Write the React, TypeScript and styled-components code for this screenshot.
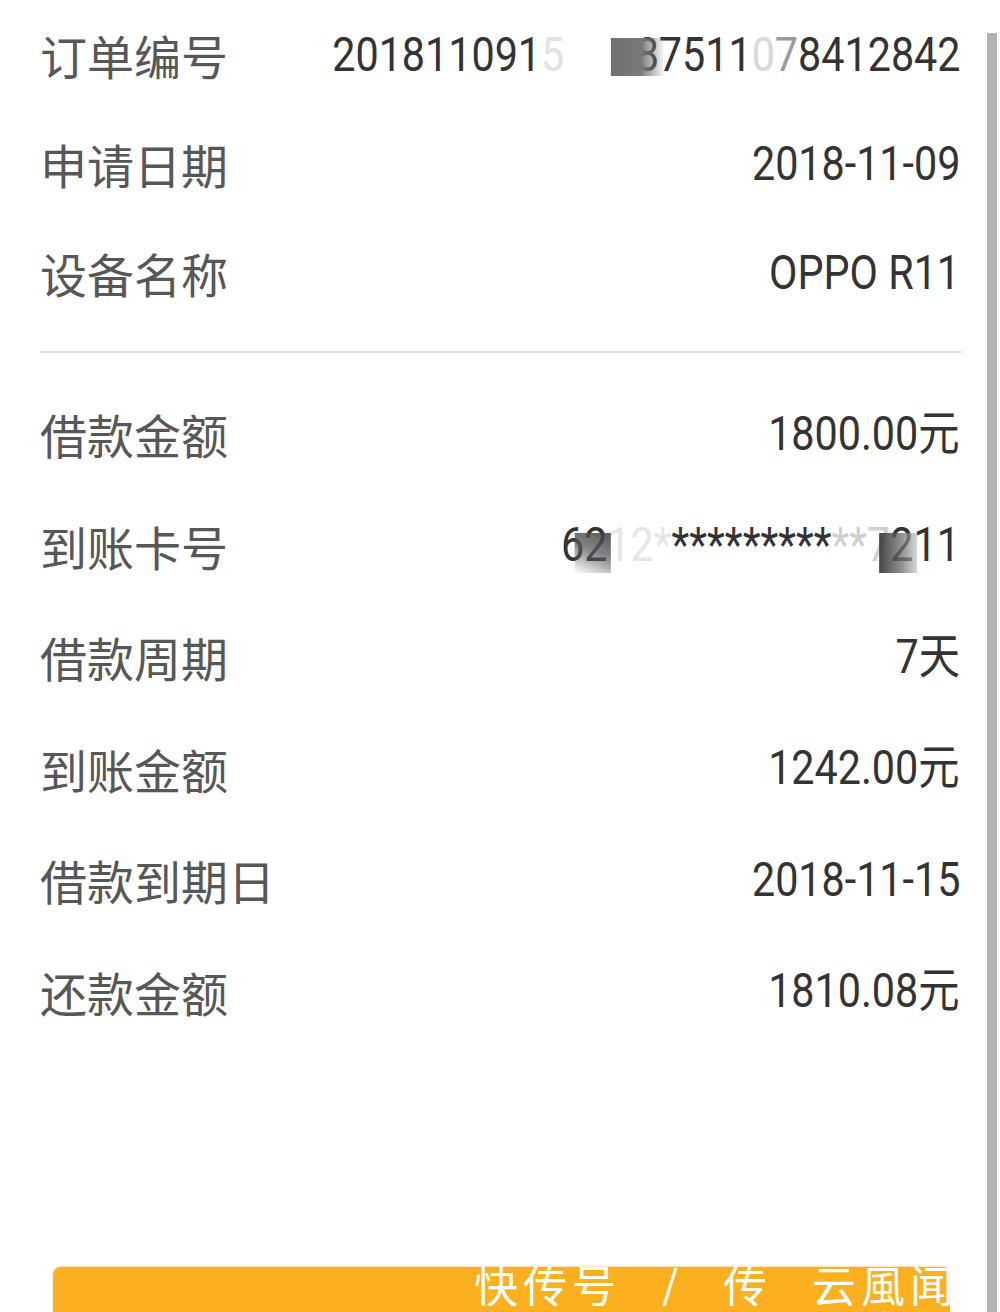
import React from "react";
import styled, { createGlobalStyle } from "styled-components";

const GlobalStyle = createGlobalStyle`
  html, body {
    margin: 0;
    padding: 0;
    background: #fff;
  }
`;

const Page = styled.div`
  position: relative;
  width: 1000px;
  height: 1312px;
  overflow: hidden;
  box-sizing: border-box;
  padding: 0 40px;
  display: flex;
  flex-direction: column;
  font-family: "Noto Sans CJK SC", "Noto Sans", sans-serif;
`;

const Section = styled.div`
  display: flex;
  flex-direction: column;
`;

const Row = styled.div<{ $h: number }>`
  height: ${({ $h }) => $h}px;
  display: flex;
  align-items: center;
  justify-content: space-between;
`;

const Label = styled.span`
  font-family: "Noto Sans CJK SC", sans-serif;
  font-size: 47px;
  line-height: 1;
  color: #575757;
`;

// 数字字体偏窄，横向压缩一下
const Value = styled.span`
  position: relative;
  display: inline-block;
  font-family: Roboto, "Noto Sans CJK SC", sans-serif;
  font-size: 48px;
  line-height: 1;
  color: #333;
  white-space: pre;
  transform: scaleX(0.86);
  transform-origin: right center;
`;

const Faded = styled.span<{ $c?: string }>`
  color: ${({ $c }) => $c ?? "#d4d4d4"};
`;

const Gap = styled.span<{ $w: number }>`
  display: inline-block;
  width: ${({ $w }) => $w}px;
`;

// 打码块
const Mosaic = styled.span<{ $right: number; $top: number; $w: number; $h: number; $bg: string }>`
  position: absolute;
  right: ${({ $right }) => $right}px;
  top: ${({ $top }) => $top}px;
  width: ${({ $w }) => $w}px;
  height: ${({ $h }) => $h}px;
  background: ${({ $bg }) => $bg};
`;

const Divider = styled.div`
  height: 2px;
  background: #e3e3e3;
  margin: 24px -2px 25px 0;
`;

const Button = styled.div`
  flex: 0 0 90px;
  margin: auto 10px -45px 13px;
  border-radius: 8px 8px 0 0;
  background: #fdb01f;
  box-shadow: 0 -1px 2px rgba(253, 176, 31, 0.4);
`;

const ScrollBar = styled.div`
  position: absolute;
  left: 987px;
  top: 33px;
  bottom: 0;
  width: 10px;
  background: #b3b3b3;
`;

const Watermark = styled.div`
  position: absolute;
  left: 474px;
  top: 1262px;
  width: 476px;
  overflow: hidden;
  white-space: pre;
  font-family: "Noto Sans CJK SC", sans-serif;
  font-size: 44px;
  line-height: 1;
  color: #fff;
  letter-spacing: 5px;
  word-spacing: 25px;
`;

const basic = [
  { label: "申请日期", value: "2018-11-09" },
  { label: "设备名称", value: "OPPO R11" },
];

const loan = [
  { label: "借款金额", value: "1800.00元" },
  { label: "到账卡号", value: "" },
  { label: "借款周期", value: "7天" },
  { label: "到账金额", value: "1242.00元" },
  { label: "借款到期日", value: "2018-11-15" },
  { label: "还款金额", value: "1810.08元" },
];

const OrderNo = () => (
  <Value>
    201811091<Faded $c="#e2e2e2">5</Faded>
    <Gap $w={83} />
    87511<Faded $c="#d8d8d8">0</Faded>
    <Faded $c="#9a9a9a">7</Faded>8412842
    <Mosaic
      $right={343}
      $top={7}
      $w={63}
      $h={38}
      $bg="linear-gradient(90deg, #6f6f6f 0%, #7a7a7a 55%, rgba(255,255,255,0) 100%)"
    />
  </Value>
);

const CardNo = () => (
  <Value>
    62<Faded $c="#e6e6e6">12*</Faded>*********
    <Faded $c="#cfcfcf">**7</Faded>211
    <Mosaic
      $right={406}
      $top={12}
      $w={42}
      $h={40}
      $bg="linear-gradient(200deg, rgba(60,60,60,0.85) 0%, rgba(90,90,90,0.75) 45%, rgba(255,255,255,0) 100%)"
    />
    <Mosaic
      $right={50}
      $top={12}
      $w={44}
      $h={40}
      $bg="linear-gradient(90deg, rgba(50,50,50,0.9) 0%, rgba(110,110,110,0.75) 60%, rgba(190,190,190,0.6) 100%)"
    />
  </Value>
);

export default function App() {
  return (
    <>
      <GlobalStyle />
      <Page>
        <Section>
          <Row $h={109}>
            <Label>订单编号</Label>
            <OrderNo />
          </Row>
          {basic.map((r) => (
            <Row $h={109} key={r.label}>
              <Label>{r.label}</Label>
              <Value>{r.value}</Value>
            </Row>
          ))}
        </Section>
        <Divider />
        <Section>
          {loan.map((r) => (
            <Row $h={111.5} key={r.label}>
              <Label>{r.label}</Label>
              {r.label === "到账卡号" ? <CardNo /> : <Value>{r.value}</Value>}
            </Row>
          ))}
        </Section>
        <Button />
        <ScrollBar />
        <Watermark>快传号 / 传 云風闻</Watermark>
      </Page>
    </>
  );
}
